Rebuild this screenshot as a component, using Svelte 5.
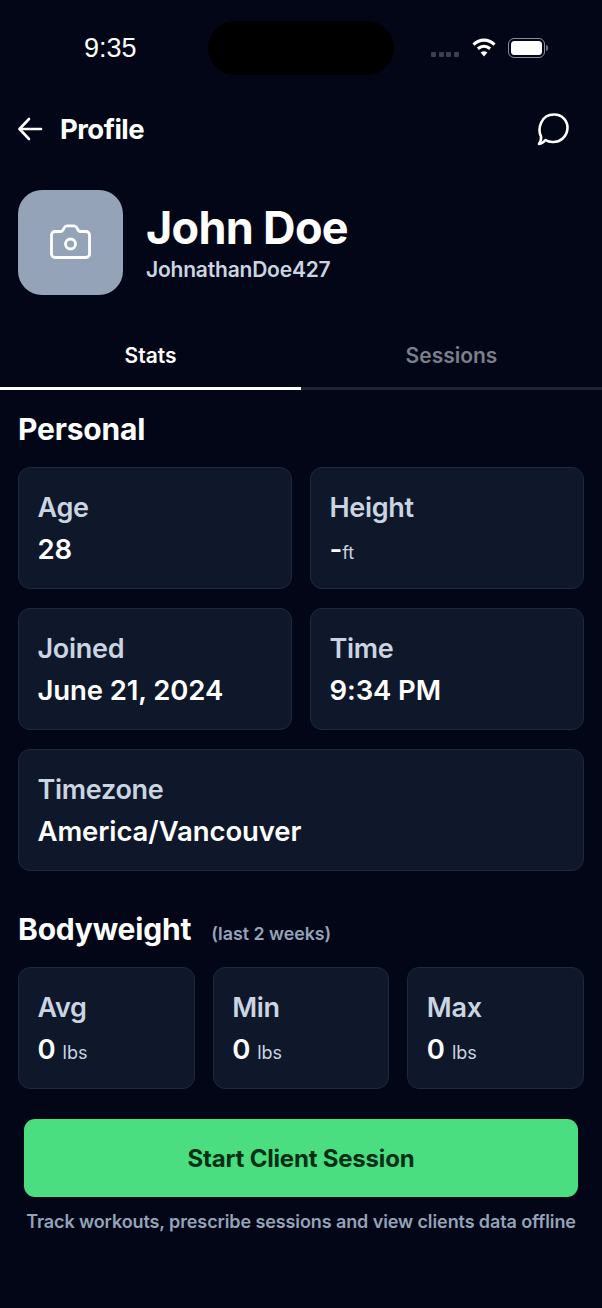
<script>
  const personal = [
    { label: 'Age', value: '28' },
    { label: 'Height', value: '-', unit: 'ft' },
    { label: 'Joined', value: 'June 21, 2024' },
    { label: 'Time', value: '9:34 PM' },
    { label: 'Timezone', value: 'America/Vancouver', wide: true }
  ];
  const weight = [
    { label: 'Avg', value: '0', unit: 'lbs' },
    { label: 'Min', value: '0', unit: 'lbs' },
    { label: 'Max', value: '0', unit: 'lbs' }
  ];
</script>

<div class="page">
  <div class="status">
    <span class="clock">9:35</span>
    <div class="island"></div>
    <div class="sys">
      <div class="dots"><i></i><i></i><i></i><i></i></div>
      <svg class="wifi" width="26" height="20" viewBox="0 0 24 19" fill="none" stroke="#fff" stroke-width="3">
        <path d="M2 7.2C8 1.6 16 1.6 22 7.2" />
        <path d="M6.2 11.2C9.7 8 14.3 8 17.8 11.2" />
        <path d="M12 18.5 8.8 14.8C10.6 13.2 13.4 13.2 15.2 14.8Z" fill="#fff" stroke="none" />
      </svg>
      <div class="battery"><div class="cell"></div></div>
      <div class="nub"></div>
    </div>
  </div>

  <header class="top">
    <div class="title">
      <svg width="28" height="28" viewBox="0 0 28 28" fill="none" stroke="#fff" stroke-width="2.6" stroke-linecap="round" stroke-linejoin="round">
        <path d="M25 14H4" /><path d="M13 4 3.5 14 13 24" />
      </svg>
      <span>Profile</span>
    </div>
    <svg width="36" height="36" viewBox="0 0 36 36" fill="none" stroke="#fff" stroke-width="2.6" stroke-linejoin="round" stroke-linecap="round">
      <path d="M5 33C7 30 7.5 28 7 25.5 3.5 18 6.5 3.5 20 3.5 28.5 3.5 33.5 10 33.5 16.5 33.5 26 25.5 31.5 18.5 31 15.5 31 13 30 11.5 29 9.5 31.5 7.5 32.7 5 33Z" />
    </svg>
  </header>

  <section class="who">
    <div class="avatar">
      <svg width="41" height="35" viewBox="0 0 41 35" fill="none" stroke="#fff" stroke-width="2.8" stroke-linejoin="round">
        <path d="M5 7.5H10.5C11.7 7.5 12.4 7 13 6L14.3 3.6C14.9 2.4 15.8 1.8 17 1.8H24C25.2 1.8 26.1 2.4 26.7 3.6L28 6C28.6 7 29.3 7.5 30.5 7.5H36C38 7.5 39.5 9 39.5 11V30C39.5 32 38 33.5 36 33.5H5C3 33.5 1.5 32 1.5 30V11C1.5 9 3 7.5 5 7.5Z" />
        <circle cx="20.5" cy="20" r="5" />
      </svg>
    </div>
    <div class="names">
      <h1>John Doe</h1>
      <p>JohnathanDoe427</p>
    </div>
  </section>

  <nav class="tabs">
    <div class="tab active">Stats</div>
    <div class="tab">Sessions</div>
  </nav>

  <main class="content">
    <h2 class="personal">Personal</h2>
    <div class="grid two">
      {#each personal as item}
        <div class="card" class:wide={item.wide}>
          <div class="label">{item.label}</div>
          <div class="value">{item.value}{#if item.unit}<span class="unit">{item.unit}</span>{/if}</div>
        </div>
      {/each}
    </div>

    <div class="heading">
      <h2>Bodyweight</h2>
      <span>(last 2 weeks)</span>
    </div>
    <div class="grid three">
      {#each weight as item}
        <div class="card">
          <div class="label">{item.label}</div>
          <div class="value">{item.value}<span class="unit spaced">{item.unit}</span></div>
        </div>
      {/each}
    </div>

    <div class="cta">
      <button>Start Client Session</button>
      <p>Track workouts, prescribe sessions and view clients data offline</p>
    </div>
  </main>
</div>

<style>
  :global(body) {
    margin: 0;
    background: #020617;
  }
  .page {
    width: 602px;
    height: 1308px;
    background: #020617;
    color: #fff;
    font-family: Inter, "Liberation Sans", sans-serif;
    overflow: hidden;
  }
  .status {
    height: 54px;
    padding-top: 21px;
    display: flex;
    align-items: flex-start;
    position: relative;
  }
  .clock {
    width: 54px;
    margin: 12px 0 0 84px;
    font: 500 27px/30px "Liberation Sans", sans-serif;
  }
  .island {
    width: 186px;
    height: 54px;
    margin-left: 70px;
    border-radius: 27px;
    background: #000;
  }
  .sys {
    display: flex;
    align-items: center;
    margin: 15px 0 0 37px;
    height: 24px;
  }
  .dots {
    display: flex;
    gap: 2.5px;
    margin-top: 12px;
    width: 29px;
  }
  .dots i {
    width: 5px;
    height: 5px;
    border-radius: 1px;
    background: #3b3f4e;
  }
  .wifi {
    margin: -3px 0 0 11px;
  }
  .battery {
    width: 37px;
    height: 20px;
    box-sizing: border-box;
    margin-left: 11px;
    padding: 2px;
    border: 1.5px solid #8a8d98;
    border-radius: 6px;
  }
  .cell {
    height: 100%;
    border-radius: 3.5px;
    background: #fff;
  }
  .nub {
    width: 2px;
    height: 6px;
    margin-left: 1px;
    border-radius: 0 2px 2px 0;
    background: #6e717c;
  }
  .top {
    height: 36px;
    margin-top: 36px;
    padding: 0 32px 0 16px;
    display: flex;
    align-items: center;
    justify-content: space-between;
  }
  .title {
    display: flex;
    align-items: center;
    gap: 16px;
    font-size: 27.5px;
    font-weight: 700;
    letter-spacing: -0.5px;
  }
  .who {
    margin-top: 43px;
    padding-left: 18px;
    display: flex;
    gap: 23px;
    align-items: center;
  }
  .avatar {
    width: 105px;
    height: 105px;
    border-radius: 24px;
    background: #94a3b8;
    display: grid;
    place-items: center;
  }
  .avatar svg {
    margin-top: -2px;
  }
  h1 {
    margin: 0;
    font-size: 45px;
    line-height: 50px;
    font-weight: 700;
    letter-spacing: -0.7px;
  }
  .names p {
    margin: 5px 0 0;
    font-size: 21px;
    line-height: 24px;
    font-weight: 600;
    color: #cbd5e1;
    letter-spacing: -0.2px;
  }
  .tabs {
    margin-top: 36px;
    display: grid;
    grid-template-columns: 301px 301px;
  }
  .tab {
    height: 59px;
    box-sizing: border-box;
    padding-top: 13px;
    text-align: center;
    font-size: 21px;
    line-height: 24px;
    font-weight: 600;
    color: #7b7f8a;
    border-bottom: 3px solid #1e2432;
  }
  .tab.active {
    color: #fff;
    border-bottom-color: #fff;
  }
  .content {
    padding: 0 18px;
  }
  h2 {
    margin: 0;
    font-size: 30px;
    line-height: 34px;
    font-weight: 700;
    letter-spacing: -0.2px;
  }
  .personal {
    margin-top: 22px;
  }
  .grid {
    display: grid;
    margin-top: 21px;
  }
  .two {
    grid-template-columns: 1fr 1fr;
    gap: 19px 18px;
  }
  .three {
    grid-template-columns: repeat(3, 1fr);
    gap: 18px;
    margin-top: 21px;
  }
  .card {
    height: 122px;
    box-sizing: border-box;
    padding: 22px 18.5px 0;
    background: #0f172a;
    border: 1.5px solid #1e293b;
    border-radius: 12px;
  }
  .wide {
    grid-column: 1 / -1;
  }
  .label {
    font-size: 27px;
    line-height: 36px;
    font-weight: 600;
    color: #cbd5e1;
    letter-spacing: -0.3px;
  }
  .value {
    margin-top: 6px;
    font-size: 27.5px;
    line-height: 34px;
    font-weight: 600;
    color: #fff;
    letter-spacing: -0.1px;
  }
  .unit {
    font-size: 18px;
    font-weight: 400;
    color: #cbd5e1;
    letter-spacing: 0;
  }
  .spaced {
    margin-left: 7px;
  }
  .heading {
    margin-top: 41px;
    display: flex;
    align-items: baseline;
    gap: 20px;
  }
  .heading span {
    font-size: 17.8px;
    font-weight: 600;
    color: #94a3b8;
  }
  .cta {
    margin: 30px 6px 0;
  }
  button {
    display: block;
    width: 100%;
    height: 78px;
    border: 0;
    border-radius: 11px;
    background: #4ade80;
    color: #052e16;
    font: 700 24px Inter, "Liberation Sans", sans-serif;
    letter-spacing: -0.2px;
  }
  .cta p {
    margin: 14px -6px 0;
    text-align: center;
    font-size: 18px;
    line-height: 22px;
    font-weight: 600;
    color: #94a3b8;
    letter-spacing: -0.1px;
  }
</style>
